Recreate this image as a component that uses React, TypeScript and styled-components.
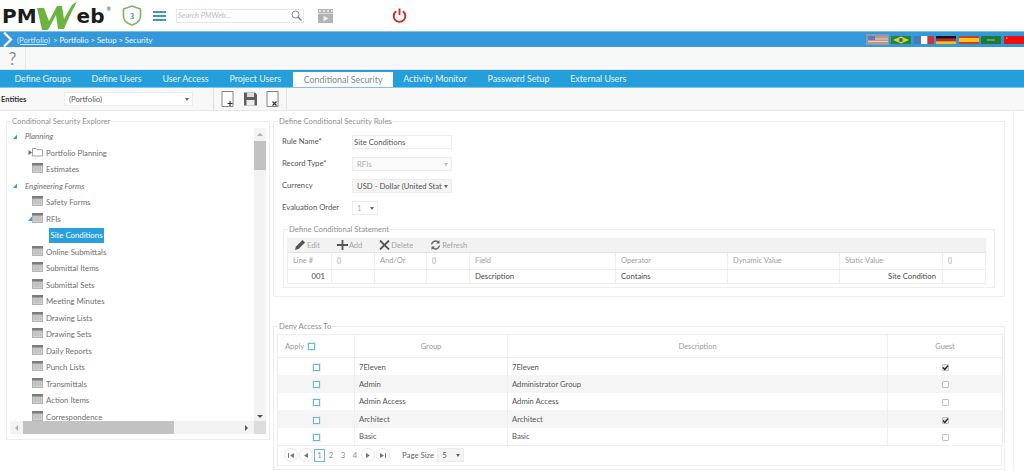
import { FC } from "react";
import styled, { createGlobalStyle } from "styled-components";

const GlobalStyle = createGlobalStyle`
  html, body {
    margin: 0;
    padding: 0;
    width: 1024px;
    height: 471px;
    overflow: hidden;
    background: #fff;
    font-family: "Lato", "Liberation Sans", sans-serif;
    font-size: 7.8px;
    color: #444;
  }
  * { box-sizing: border-box; }
`;

const Page = styled.div`
  width: 1024px;
  height: 471px;
  display: flex;
  flex-direction: column;
  overflow: hidden;
`;

/* header */
const Header = styled.header`
  height: 31px;
  display: flex;
  align-items: center;
  background: #fff;
`;

const Logo = styled.div`
  position: relative;
  width: 109px;
  height: 31px;
  margin-left: 2px;
  display: flex;
  align-items: center;
`;

const LogoText = styled.span`
  font-family: "DejaVu Sans", sans-serif;
  font-weight: bold;
  font-size: 20px;
  line-height: 31px;
  color: #1c1c1c;
  position: relative;
  top: 1px;
`;

const LogoSwoosh = styled.svg`
  width: 40px;
  height: 28px;
  flex: none;
  margin-top: 1px;
`;

const LogoMark = styled.span`
  position: absolute;
  right: 0;
  top: 6px;
  font-size: 5px;
  color: #333;
`;

const ShieldIcon = styled.svg`
  width: 20px;
  height: 21px;
  margin-left: 11px;
  flex: none;
`;

const Burger = styled.div`
  width: 13px;
  height: 10px;
  margin-left: 11px;
  flex: none;
  display: flex;
  flex-direction: column;
  justify-content: space-between;
  i {
    display: block;
    height: 2px;
    background: #3a96d6;
  }
`;

const SearchBox = styled.div`
  width: 128px;
  height: 14px;
  margin-left: 10px;
  flex: none;
  border: 1px solid #e6e6e6;
  display: flex;
  align-items: center;
  justify-content: space-between;
  padding: 0 1px 0 1px;
  font-style: italic;
  font-size: 7.5px;
  color: #b4bcc8;
`;

const FilmIcon = styled.svg`
  width: 15px;
  height: 14px;
  margin-left: 14px;
  flex: none;
`;

const PowerIcon = styled.svg`
  width: 15px;
  height: 15px;
  margin-left: 59px;
  flex: none;
`;

/* breadcrumb */
const Breadcrumb = styled.div`
  height: 16px;
  background: #3598db;
  border-top: 1px solid #7fc0ea;
  display: flex;
  align-items: center;
  color: #f2f8fc;
  font-size: 7.7px;
`;

const Chevron = styled.svg`
  width: 10px;
  height: 15px;
  margin: 0 4px 0 3px;
  flex: none;
`;

const CrumbLink = styled.a`
  text-decoration: underline;
  color: #dcebf6;
  margin-right: 3px;
`;

const Flags = styled.div`
  margin-left: auto;
  display: flex;
  align-items: center;
  gap: 2.6px;
`;

const FlagWrap = styled.span<{ $active?: boolean }>`
  display: flex;
  align-items: center;
  justify-content: center;
  width: ${(p) => (p.$active ? "23px" : "20px")};
  height: ${(p) => (p.$active ? "11px" : "8px")};
  background: ${(p) => (p.$active ? "#8a9bb0" : "transparent")};
  margin-right: ${(p) => (p.$active ? "-1px" : "0")};
`;

const FlagSvg = styled.svg`
  width: 20px;
  height: 8px;
  display: block;
`;

/* help row */
const HelpRow = styled.div`
  height: 23px;
  background: #f8f8f8;
  border-bottom: 1px solid #e4e4e4;
  display: flex;
`;

const HelpCell = styled.div`
  width: 26px;
  border-right: 1px solid #e6e6e6;
  display: flex;
  align-items: center;
  justify-content: center;
  font-size: 17px;
  color: #8c8c8c;
`;

/* tabs */
const TabBar = styled.nav`
  height: 18px;
  background: #259fdb;
  border-bottom: 1px solid #7cc6ec;
  display: flex;
  align-items: flex-end;
  padding-left: 4px;
`;

const Tab = styled.div<{ $active?: boolean }>`
  height: ${(p) => (p.$active ? "15px" : "17px")};
  margin-left: ${(p) => (p.$active ? "2px" : "0")};
  padding: 0 10.4px;
  display: flex;
  align-items: center;
  font-size: 8.85px;
  white-space: nowrap;
  color: ${(p) => (p.$active ? "#7d8a92" : "#e6f4fb")};
  background: ${(p) => (p.$active ? "#fff" : "transparent")};
`;

/* entities */
const EntityBar = styled.div`
  height: 23px;
  background: #f8f8f8;
  border-bottom: 1px solid #e8e8e8;
  display: flex;
  align-items: center;
`;

const EntityLabel = styled.b`
  width: 64px;
  padding-left: 1px;
  font-size: 7.5px;
  color: #333;
`;

const Select = styled.div<{ $w: number; $disabled?: boolean; $flat?: boolean }>`
  width: ${(p) => p.$w}px;
  height: 14px;
  flex: none;
  display: flex;
  align-items: center;
  justify-content: space-between;
  padding: 0 3px 0 4px;
  background: ${(p) => (p.$flat ? "#fff" : p.$disabled ? "#fafafa" : "#f4f4f4")};
  border: 1px solid #ececec;
  font-size: 7.7px;
  color: ${(p) => (p.$disabled ? "#b0b0b0" : "#555")};
  overflow: hidden;
  white-space: nowrap;
`;

const Caret = styled.i<{ $light?: boolean }>`
  flex: none;
  width: 0;
  height: 0;
  margin-left: 2px;
  border-left: 2.5px solid transparent;
  border-right: 2.5px solid transparent;
  border-top: 3px solid ${(p) => (p.$light ? "#b8b8b8" : "#666")};
`;

const EntityTools = styled.div`
  margin-left: 20px;
  width: 74px;
  height: 22px;
  border-left: 1px solid #e2e2e2;
  border-right: 1px solid #e2e2e2;
  display: flex;
  align-items: center;
  justify-content: space-between;
  padding: 0 7px;
`;

const ToolIcon = styled.svg`
  width: 13px;
  height: 16px;
  flex: none;
`;

/* main */
const Main = styled.main`
  flex: 1;
  min-height: 0;
  width: 1014px;
  border-right: 1px solid #eee;
  display: grid;
  grid-template-columns: 264px 732px;
  column-gap: 3px;
  padding: 6px 0 0 6px;
  background: #fff;
`;

const Column = styled.div`
  display: flex;
  flex-direction: column;
`;

const Group = styled.fieldset<{ $h: number; $gap?: number }>`
  margin: 0 0 ${(p) => p.$gap ?? 0}px;
  padding: 0;
  height: ${(p) => p.$h}px;
  min-width: 0;
  border: 1px solid #ededed;
`;

const Legend = styled.legend`
  padding: 0 1px;
  margin-left: 4px;
  font-size: 7.7px;
  line-height: 9px;
  color: #8f8f8f;
`;

/* tree */
const TreeBox = styled.div`
  height: 306px;
  margin: 2px 3px 0 3px;
  display: grid;
  grid-template-columns: 1fr 12px;
  grid-template-rows: 293px 13px;
`;

const TreeList = styled.div`
  overflow: hidden;
`;

const TreeRow = styled.div<{ $level: number; $head?: boolean }>`
  height: 16.5px;
  display: flex;
  align-items: center;
  padding-left: ${(p) => (p.$level === 0 ? 3 : 18)}px;
  white-space: nowrap;
  font-size: 7.8px;
  font-style: ${(p) => (p.$head ? "italic" : "normal")};
  color: #6e6e6e;
`;

const Twist = styled.svg`
  width: 4px;
  height: 5px;
  flex: none;
`;

const TwistSlot = styled.span<{ $w: number }>`
  width: ${(p) => p.$w}px;
  flex: none;
  display: flex;
  align-items: center;
`;

const DocIcon = styled.svg`
  width: 11px;
  height: 10px;
  flex: none;
  margin: -2px 3px 0 0;
`;

const Selected = styled.span`
  margin-left: 21px;
  height: 15px;
  width: 55px;
  display: flex;
  align-items: center;
  justify-content: center;
  background: #2a9fe0;
  color: #fff;
`;

const VScroll = styled.div`
  background: #f3f3f3;
  display: flex;
  flex-direction: column;
  align-items: center;
  justify-content: space-between;
  padding: 5px 0 3px;
`;

const VThumb = styled.div`
  width: 100%;
  height: 29px;
  background: #c2c2c2;
  margin-top: 5px;
  margin-bottom: auto;
`;

const ArrowUp = styled.i`
  width: 0;
  height: 0;
  border-left: 3px solid transparent;
  border-right: 3px solid transparent;
  border-bottom: 3px solid #b0b0b0;
`;

const ArrowDown = styled.i`
  width: 0;
  height: 0;
  border-left: 3px solid transparent;
  border-right: 3px solid transparent;
  border-top: 3px solid #555;
`;

const HScroll = styled.div`
  background: #f3f3f3;
  display: flex;
  align-items: center;
  padding: 0 6px 0 5px;
`;

const HThumb = styled.div`
  width: 151px;
  height: 100%;
  background: #c2c2c2;
  margin-left: 5px;
  margin-right: auto;
`;

const ArrowLeft = styled.i`
  width: 0;
  height: 0;
  border-top: 3px solid transparent;
  border-bottom: 3px solid transparent;
  border-right: 3px solid #b0b0b0;
`;

const ArrowRight = styled.i`
  width: 0;
  height: 0;
  border-top: 3px solid transparent;
  border-bottom: 3px solid transparent;
  border-left: 3px solid #555;
`;

const Corner = styled.div`
  background: #dcdcdc;
`;

/* form */
const FormRow = styled.div`
  display: flex;
  align-items: center;
  height: 22px;
`;

const FieldLabel = styled.label`
  width: 78px;
  padding-left: 8px;
  margin-top: -2px;
  font-size: 7.7px;
  color: #555;
  flex: none;
  white-space: nowrap;
`;

const TextInput = styled.div`
  width: 100px;
  height: 14px;
  border: 1px solid #ececec;
  display: flex;
  align-items: center;
  padding-left: 1px;
  font-size: 7.7px;
  color: #555;
`;

const Form = styled.div`
  padding-top: 5px;
  display: flex;
  flex-direction: column;
`;

const Statement = styled.div`
  margin: 6px 9px 0 9px;
`;

const ActionBar = styled.div`
  height: 15px;
  margin: 4px 0 0 3px;
  width: 699px;
  background: #f2f2f2;
  border-bottom: 1px solid #e2e2e2;
  display: flex;
  align-items: center;
  padding-left: 8px;
  gap: 17px;
  color: #a4a4a4;
  font-size: 7.5px;
`;

const Action = styled.span`
  display: flex;
  align-items: center;
  gap: 1px;
`;

const ActionIcon = styled.svg`
  width: 11px;
  height: 10px;
  flex: none;
`;

const Table = styled.table<{ $w: number }>`
  table-layout: fixed;
  border-collapse: collapse;
  width: ${(p) => p.$w}px;
  font-size: 7.7px;
`;

const Col = styled.col<{ $w: number }>`
  width: ${(p) => p.$w}px;
`;

const StatementTable = styled(Table)`
  margin-left: 3px;
  th {
    height: 16px;
    font-size: 7.5px;
    font-weight: normal;
    color: #a0a0a0;
    text-align: left;
    padding: 0 5px;
    border: 1px solid #eee;
    border-top: none;
  }
  td {
    height: 14px;
    padding: 0 5px;
    color: #4a4a4a;
    border: 1px solid #eee;
  }
`;

const RightCell = styled.td`
  && {
    text-align: right;
    padding-right: 6px;
  }
`;

const DenyTable = styled(Table)`
  margin: 3px 0 0 3px;
  border: 1px solid #eee;
  th {
    height: 23px;
    font-size: 7.5px;
    font-weight: normal;
    color: #9a9a9a;
    text-align: center;
    border: 1px solid #eee;
  }
  th:first-child {
    text-align: left;
    padding-left: 7px;
  }
  td {
    height: 17.6px;
    padding: 0 4px;
    color: #555;
    border-left: 1px solid #eee;
    border-right: 1px solid #eee;
  }
  tbody tr:nth-child(even) td {
    background: #f5f5f5;
  }
  tbody tr:last-child td {
    border-bottom: 1px solid #eee;
  }
`;

const CenterCell = styled.td`
  && {
    text-align: center;
    padding: 0;
  }
`;

const HeadApply = styled.span`
  display: inline-flex;
  align-items: center;
  gap: 4px;
`;

const BlueBox = styled.i`
  display: inline-block;
  width: 7px;
  height: 7px;
  border: 1.5px solid #62b8e8;
  background: #fff;
  outline: 1px solid #e6eef3;
  vertical-align: middle;
`;

const GuestBox = styled.i<{ $on?: boolean }>`
  display: inline-flex;
  align-items: center;
  justify-content: center;
  width: 7px;
  height: 7px;
  border: 1px solid #c0c0c0;
  border-radius: 1px;
  background: ${(p) => (p.$on ? "#e4e4e4" : "#fff")};
  vertical-align: middle;
  svg {
    width: 7px;
    height: 7px;
    flex: none;
  }
`;

/* pager */
const Pager = styled.div`
  width: 725px;
  height: 20px;
  margin-left: 3px;
  display: flex;
  align-items: center;
  border: 1px solid #eee;
  border-top: none;
  padding-left: 6px;
  color: #8c8c8c;
  font-size: 7.8px;
`;

const PageRound = styled.span`
  width: 14px;
  height: 14px;
  border: 1px solid #e8e8e8;
  border-radius: 50%;
  display: flex;
  align-items: center;
  justify-content: center;
  margin-right: 1px;
  flex: none;
  svg {
    width: 6px;
    height: 5px;
  }
`;

const PageNum = styled.span<{ $active?: boolean }>`
  width: ${(p) => (p.$active ? 11 : 12)}px;
  height: ${(p) => (p.$active ? 13 : 12)}px;
  display: flex;
  align-items: center;
  justify-content: center;
  flex: none;
  border: ${(p) => (p.$active ? "1px solid #62b8e8" : "none")};
`;

const PageSize = styled.span`
  margin: 0 3px 0 11px;
  font-size: 7.8px;
  color: #666;
`;

const tree: { name: string; level: number; head?: boolean; kind?: string }[] = [
  { name: "Planning", level: 0, head: true, kind: "open" },
  { name: "Portfolio Planning", level: 1, kind: "folder" },
  { name: "Estimates", level: 1 },
  { name: "Engineering Forms", level: 0, head: true, kind: "open" },
  { name: "Safety Forms", level: 1 },
  { name: "RFIs", level: 1, kind: "openDoc" },
  { name: "Site Conditions", level: 2 },
  { name: "Online Submittals", level: 1 },
  { name: "Submittal Items", level: 1 },
  { name: "Submittal Sets", level: 1 },
  { name: "Meeting Minutes", level: 1 },
  { name: "Drawing Lists", level: 1 },
  { name: "Drawing Sets", level: 1 },
  { name: "Daily Reports", level: 1 },
  { name: "Punch Lists", level: 1 },
  { name: "Transmittals", level: 1 },
  { name: "Action Items", level: 1 },
  { name: "Correspondence", level: 1 },
];

const groups = [
  { group: "7Eleven", desc: "7Eleven", guest: true },
  { group: "Admin", desc: "Administrator Group", guest: false },
  { group: "Admin Access", desc: "Admin Access", guest: false },
  { group: "Architect", desc: "Architect", guest: true },
  { group: "Basic", desc: "Basic", guest: false },
];

const Doc: FC = () => (
  <DocIcon viewBox="0 0 11 10">
    <rect x="0" y="0" width="11" height="10" fill="#b4b4b4" />
    <rect x="0" y="0" width="11" height="2.4" fill="#7c7c7c" />
    <rect x="1" y="3.4" width="9" height="5.6" fill="#d2d2d2" />
    <path d="M1.5 5h8M1.5 7h8" stroke="#9a9a9a" strokeWidth="0.8" strokeDasharray="1 .6" />
  </DocIcon>
);

const Folder: FC = () => (
  <DocIcon viewBox="0 0 11 10">
    <path d="M.5 9V1.5h3.5l1 1.2h5.5V9z" fill="#fff" stroke="#8a8a8a" strokeWidth="0.8" />
  </DocIcon>
);

const OpenTwist: FC = () => (
  <Twist viewBox="0 0 4 5">
    <path d="M4 .5V5H0z" fill="#2a9fe0" />
  </Twist>
);

const ClosedTwist: FC = () => (
  <Twist viewBox="0 0 4 5">
    <path d="M.5 0L4 2.5.5 5z" fill="#666" />
  </Twist>
);

const Check: FC = () => (
  <svg viewBox="0 0 7 7">
    <path d="M1 3.6l1.8 1.8L6 1.6" fill="none" stroke="#222" strokeWidth="1.4" />
  </svg>
);

const App: FC = () => {
  return (
    <Page>
      <GlobalStyle />
      <Header>
        <Logo>
          <LogoText>PM</LogoText>
          <LogoSwoosh viewBox="0 0 40 28">
            <path
              d="M0 6l7 0 5 13L20 4l5 0 2 13L35 3c1-1 3-2.500 5-3-3 5-8 15-13 27h-6l-2-14-8 15h-6z"
              fill="#6cb33f"
            />
          </LogoSwoosh>
          <LogoText>eb</LogoText>
          <LogoMark>®</LogoMark>
        </Logo>
        <ShieldIcon viewBox="0 0 20 21">
          <path
            d="M10 1l8.500 3v7c0 4.500-3.500 7.500-8.500 9-5-1.500-8.500-4.500-8.500-9V4z"
            fill="#fff"
            stroke="#7cb65a"
            strokeWidth="1.6"
          />
          <text x="10" y="14" textAnchor="middle" fontSize="8" fontWeight="bold" fill="#3a7fb5" fontFamily="Liberation Serif, serif">
            3
          </text>
        </ShieldIcon>
        <Burger>
          <i />
          <i />
          <i />
        </Burger>
        <SearchBox>
          Search PMWeb...
          <svg width="11" height="11" viewBox="0 0 11 11">
            <circle cx="4.500" cy="4.500" r="3.500" fill="none" stroke="#777" strokeWidth="0.9" />
            <path d="M7 7l3.500 3.500" stroke="#777" strokeWidth="1.300" />
          </svg>
        </SearchBox>
        <FilmIcon viewBox="0 0 15 14">
          <rect width="15" height="14" fill="#b3b3b3" />
          <path d="M1 1h2v2H1zM5 1h2v2H5zM9 1h2v2H9zM13 1h1.500v2H13z" fill="#e8e8e8" />
          <rect y="4" width="15" height="1" fill="#ddd" />
          <path d="M5.500 6.500v6l5-3z" fill="#eee" />
        </FilmIcon>
        <PowerIcon viewBox="0 0 15 15">
          <path d="M4.300 3.200a5.800 5.800 0 1 0 6.400 0" fill="none" stroke="#cc2a28" strokeWidth="1.900" />
          <path d="M7.500 .5v6.500" stroke="#cc2a28" strokeWidth="1.900" />
        </PowerIcon>
      </Header>

      <Breadcrumb>
        <Chevron viewBox="0 0 10 15">
          <path d="M1 .5l7 7-7 7" fill="none" stroke="#fff" strokeWidth="2.200" />
        </Chevron>
        <CrumbLink>(Portfolio)</CrumbLink>
        &gt; Portfolio &gt; Setup &gt; Security
        <Flags>
          <FlagWrap $active>
            <FlagSvg viewBox="0 0 20 8">
              <rect width="20" height="8" fill="#c49484" />
              <path d="M0 3h20M0 5.500h20" stroke="#ddd" strokeWidth="0.800" />
              <rect width="7" height="4" fill="#5a7fb0" />
            </FlagSvg>
          </FlagWrap>
          <FlagWrap>
            <FlagSvg viewBox="0 0 20 8">
              <rect width="20" height="8" fill="#1c8a3a" />
              <path d="M10 .5L18 4l-8 3.500L2 4z" fill="#e5d32b" />
              <circle cx="10" cy="4" r="2" fill="#3a5f9a" />
            </FlagSvg>
          </FlagWrap>
          <FlagWrap>
            <FlagSvg viewBox="0 0 20 8">
              <rect width="7" height="8" fill="#4a78b4" />
              <rect x="7" width="6.500" height="8" fill="#fff" />
              <rect x="13.500" width="6.500" height="8" fill="#cc3238" />
            </FlagSvg>
          </FlagWrap>
          <FlagWrap>
            <FlagSvg viewBox="0 0 20 8">
              <rect width="20" height="2.700" fill="#111" />
              <rect y="2.700" width="20" height="2.700" fill="#dd1c1c" />
              <rect y="5.400" width="20" height="2.600" fill="#f2c40f" />
            </FlagSvg>
          </FlagWrap>
          <FlagWrap>
            <FlagSvg viewBox="0 0 20 8">
              <rect width="20" height="8" fill="#d33b32" />
              <rect y="2" width="20" height="4" fill="#f3c90e" />
            </FlagSvg>
          </FlagWrap>
          <FlagWrap>
            <FlagSvg viewBox="0 0 20 8">
              <rect width="20" height="8" fill="#1d7a35" />
              <path d="M6 4h8" stroke="#a8c8a8" strokeWidth="1" />
            </FlagSvg>
          </FlagWrap>
          <FlagWrap>
            <FlagSvg viewBox="0 0 20 8">
              <rect width="20" height="8" fill="#f00d0d" />
              <rect x="2" y="1.500" width="1.500" height="1.500" fill="#f5d90a" />
            </FlagSvg>
          </FlagWrap>
        </Flags>
      </Breadcrumb>

      <HelpRow>
        <HelpCell>?</HelpCell>
      </HelpRow>

      <TabBar>
        <Tab>Define Groups</Tab>
        <Tab>Define Users</Tab>
        <Tab>User Access</Tab>
        <Tab>Project Users</Tab>
        <Tab $active>Conditional Security</Tab>
        <Tab>Activity Monitor</Tab>
        <Tab>Password Setup</Tab>
        <Tab>External Users</Tab>
      </TabBar>

      <EntityBar>
        <EntityLabel>Entities</EntityLabel>
        <Select $w={129} $flat>
          (Portfolio)
          <Caret />
        </Select>
        <EntityTools>
          <ToolIcon viewBox="0 0 13 16">
            <path d="M1 .5h11v15H1z" fill="#fff" stroke="#777" strokeWidth="0.900" />
            <path d="M6.500 12.500h5M9 10v5" stroke="#333" strokeWidth="1.200" />
          </ToolIcon>
          <ToolIcon viewBox="0 0 13 16">
            <path d="M0 1.500h11l2 2v11H0z" fill="#5f5f5f" />
            <rect x="3" y="1.500" width="7" height="4.500" fill="#ddd" />
            <rect x="2.500" y="9" width="8" height="5.500" fill="#eee" />
          </ToolIcon>
          <ToolIcon viewBox="0 0 13 16">
            <path d="M1 .5h11v15H1z" fill="#fff" stroke="#777" strokeWidth="0.900" />
            <path d="M6.500 10.500l4 4M10.500 10.500l-4 4" stroke="#333" strokeWidth="1.200" />
          </ToolIcon>
        </EntityTools>
      </EntityBar>

      <Main>
        <Column>
          <Group $h={323}>
            <Legend>Conditional Security Explorer</Legend>
            <TreeBox>
              <TreeList>
                {tree.map((t) => (
                  <TreeRow key={t.name} $level={t.level} $head={t.head}>
                    {t.level === 0 && (
                      <TwistSlot $w={12}>
                        <OpenTwist />
                      </TwistSlot>
                    )}
                    {t.level === 1 && (
                      <TwistSlot $w={4}>
                        {t.kind === "folder" && <ClosedTwist />}
                        {t.kind === "openDoc" && <OpenTwist />}
                      </TwistSlot>
                    )}
                    {t.level === 2 ? (
                      <Selected>{t.name}</Selected>
                    ) : (
                      <>
                        {t.level === 1 && (t.kind === "folder" ? <Folder /> : <Doc />)}
                        {t.name}
                      </>
                    )}
                  </TreeRow>
                ))}
              </TreeList>
              <VScroll>
                <ArrowUp />
                <VThumb />
                <ArrowDown />
              </VScroll>
              <HScroll>
                <ArrowLeft />
                <HThumb />
                <ArrowRight />
              </HScroll>
              <Corner />
            </TreeBox>
          </Group>
        </Column>

        <Column>
          <Group $h={180} $gap={25}>
            <Legend>Define Conditional Security Rules</Legend>
            <Form>
              <FormRow>
                <FieldLabel>Rule Name*</FieldLabel>
                <TextInput>Site Conditions</TextInput>
              </FormRow>
              <FormRow>
                <FieldLabel>Record Type*</FieldLabel>
                <Select $w={100} $disabled>
                  RFIs
                  <Caret $light />
                </Select>
              </FormRow>
              <FormRow>
                <FieldLabel>Currency</FieldLabel>
                <Select $w={100}>
                  USD - Dollar (United Stat
                  <Caret />
                </Select>
              </FormRow>
              <FormRow>
                <FieldLabel>Evaluation Order</FieldLabel>
                <Select $w={26} $flat $disabled>
                  1
                  <Caret />
                </Select>
              </FormRow>
            </Form>
            <Statement>
              <Group $h={63}>
                <Legend>Define Conditional Statement</Legend>
                <ActionBar>
                  <Action>
                    <ActionIcon viewBox="0 0 11 10">
                      <path d="M0 10l1-3.500L7.500 0 10 2.500 3.500 9z" fill="#555" />
                    </ActionIcon>
                    Edit
                  </Action>
                  <Action>
                    <ActionIcon viewBox="0 0 11 10">
                      <path d="M5.500 0v10M0 5h11" stroke="#555" strokeWidth="1.800" />
                    </ActionIcon>
                    Add
                  </Action>
                  <Action>
                    <ActionIcon viewBox="0 0 11 10">
                      <path d="M1 .5l9 9M10 .5l-9 9" stroke="#555" strokeWidth="1.800" />
                    </ActionIcon>
                    Delete
                  </Action>
                  <Action>
                    <ActionIcon viewBox="0 0 11 10">
                      <path
                        d="M1.500 4.500A4 4 0 0 1 8.500 2.500M9.500 5.500A4 4 0 0 1 2.500 7.500"
                        fill="none"
                        stroke="#666"
                        strokeWidth="1.500"
                      />
                      <path d="M9.500 0v3.500H6zM1.500 10V6.500H5z" fill="#666" />
                    </ActionIcon>
                    Refresh
                  </Action>
                </ActionBar>
                <StatementTable $w={698}>
                  <colgroup>
                    <Col $w={44} />
                    <Col $w={43} />
                    <Col $w={52} />
                    <Col $w={43} />
                    <Col $w={146} />
                    <Col $w={112} />
                    <Col $w={112} />
                    <Col $w={103} />
                    <Col $w={43} />
                  </colgroup>
                  <thead>
                    <tr>
                      <th>Line #</th>
                      <th>()</th>
                      <th>And/Or</th>
                      <th>()</th>
                      <th>Field</th>
                      <th>Operator</th>
                      <th>Dynamic Value</th>
                      <th>Static Value</th>
                      <th>()</th>
                    </tr>
                  </thead>
                  <tbody>
                    <tr>
                      <RightCell>001</RightCell>
                      <td />
                      <td />
                      <td />
                      <td>Description</td>
                      <td>Contains</td>
                      <td />
                      <RightCell>Site Condition</RightCell>
                      <td />
                    </tr>
                  </tbody>
                </StatementTable>
              </Group>
            </Statement>
          </Group>

          <Group $h={148}>
            <Legend>Deny Access To</Legend>
            <DenyTable $w={725}>
              <colgroup>
                <Col $w={77} />
                <Col $w={153} />
                <Col $w={380} />
                <Col $w={115} />
              </colgroup>
              <thead>
                <tr>
                  <th>
                    <HeadApply>
                      Apply <BlueBox />
                    </HeadApply>
                  </th>
                  <th>Group</th>
                  <th>Description</th>
                  <th>Guest</th>
                </tr>
              </thead>
              <tbody>
                {groups.map((g) => (
                  <tr key={g.group}>
                    <CenterCell>
                      <BlueBox />
                    </CenterCell>
                    <td>{g.group}</td>
                    <td>{g.desc}</td>
                    <CenterCell>
                      <GuestBox $on={g.guest}>{g.guest && <Check />}</GuestBox>
                    </CenterCell>
                  </tr>
                ))}
              </tbody>
            </DenyTable>
            <Pager>
              <PageRound>
                <svg viewBox="0 0 6 5">
                  <path d="M0 0h1v5H0zM6 0v5L2 2.500z" fill="#777" />
                </svg>
              </PageRound>
              <PageRound>
                <svg viewBox="0 0 6 5">
                  <path d="M5 0v5L1 2.500z" fill="#777" />
                </svg>
              </PageRound>
              <PageNum $active>1</PageNum>
              <PageNum>2</PageNum>
              <PageNum>3</PageNum>
              <PageNum>4</PageNum>
              <PageRound>
                <svg viewBox="0 0 6 5">
                  <path d="M1 0v5l4-2.500z" fill="#777" />
                </svg>
              </PageRound>
              <PageRound>
                <svg viewBox="0 0 6 5">
                  <path d="M6 0H5v5h1zM0 0v5l4-2.500z" fill="#777" />
                </svg>
              </PageRound>
              <PageSize>Page Size</PageSize>
              <Select $w={27}>
                5
                <Caret />
              </Select>
            </Pager>
          </Group>
        </Column>
      </Main>
    </Page>
  );
};

export default App;
